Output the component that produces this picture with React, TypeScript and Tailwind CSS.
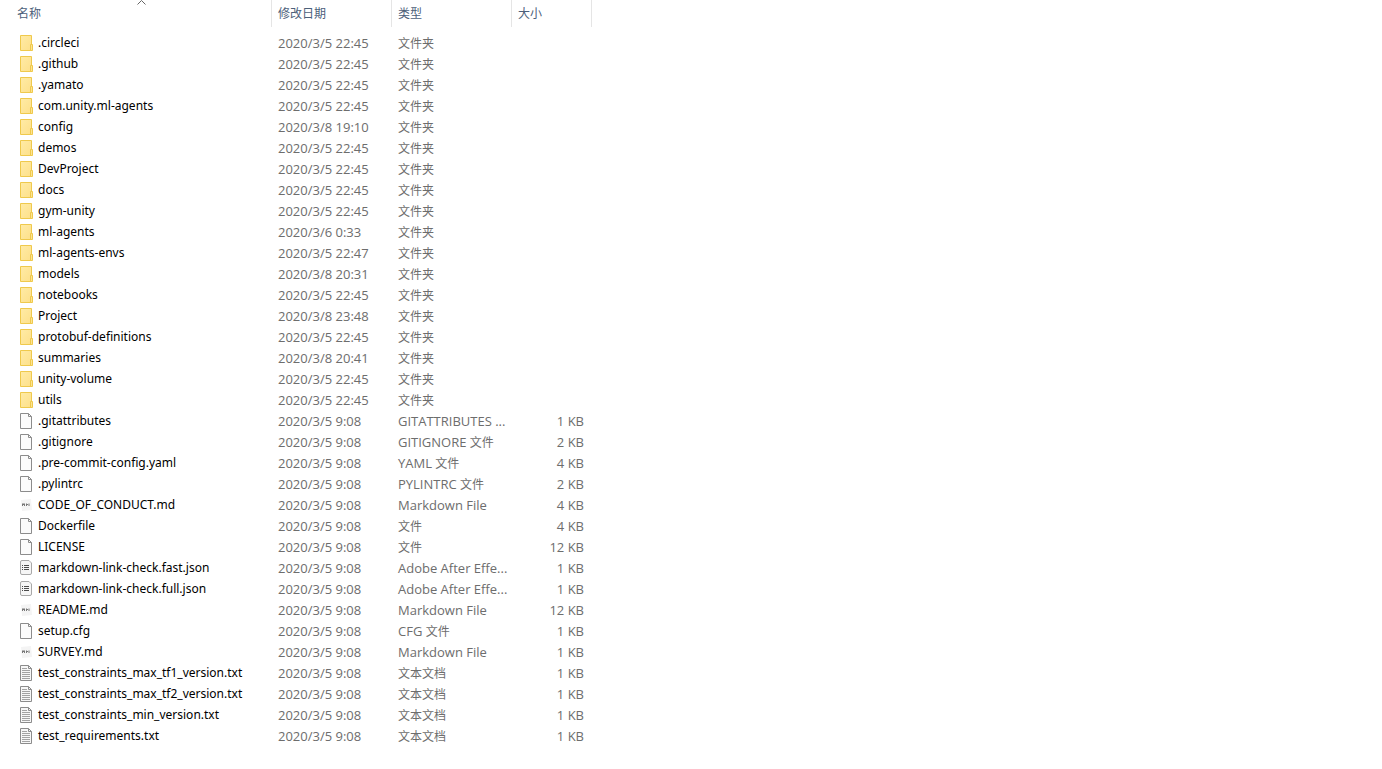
type Kind = "folder" | "file" | "markdown" | "json" | "text";

type Entry = {
  name: string;
  date: string;
  kind: Kind;
  type: [string, string];
  size: string;
};

const folder = (name: string, date = "2020/3/5 22:45"): Entry => ({
  name,
  date,
  kind: "folder",
  type: ["", "文件夹"],
  size: "",
});

const file = (name: string, kind: Kind, latin: string, cjk: string, size: string): Entry => ({
  name,
  date: "2020/3/5 9:08",
  kind,
  type: [latin, cjk],
  size,
});

const entries: Entry[] = [
  folder(".circleci"),
  folder(".github"),
  folder(".yamato"),
  folder("com.unity.ml-agents"),
  folder("config", "2020/3/8 19:10"),
  folder("demos"),
  folder("DevProject"),
  folder("docs"),
  folder("gym-unity"),
  folder("ml-agents", "2020/3/6 0:33"),
  folder("ml-agents-envs", "2020/3/5 22:47"),
  folder("models", "2020/3/8 20:31"),
  folder("notebooks"),
  folder("Project", "2020/3/8 23:48"),
  folder("protobuf-definitions"),
  folder("summaries", "2020/3/8 20:41"),
  folder("unity-volume"),
  folder("utils"),
  file(".gitattributes", "file", "GITATTRIBUTES ...", "", "1 KB"),
  file(".gitignore", "file", "GITIGNORE ", "文件", "2 KB"),
  file(".pre-commit-config.yaml", "file", "YAML ", "文件", "4 KB"),
  file(".pylintrc", "file", "PYLINTRC ", "文件", "2 KB"),
  file("CODE_OF_CONDUCT.md", "markdown", "Markdown File", "", "4 KB"),
  file("Dockerfile", "file", "", "文件", "4 KB"),
  file("LICENSE", "file", "", "文件", "12 KB"),
  file("markdown-link-check.fast.json", "json", "Adobe After Effe...", "", "1 KB"),
  file("markdown-link-check.full.json", "json", "Adobe After Effe...", "", "1 KB"),
  file("README.md", "markdown", "Markdown File", "", "12 KB"),
  file("setup.cfg", "file", "CFG ", "文件", "1 KB"),
  file("SURVEY.md", "markdown", "Markdown File", "", "1 KB"),
  file("test_constraints_max_tf1_version.txt", "text", "", "文本文档", "1 KB"),
  file("test_constraints_max_tf2_version.txt", "text", "", "文本文档", "1 KB"),
  file("test_constraints_min_version.txt", "text", "", "文本文档", "1 KB"),
  file("test_requirements.txt", "text", "", "文本文档", "1 KB"),
];

function FileIcon({ kind }: { kind: Kind }) {
  return (
    <svg className="mt-[3px] h-4 w-4 shrink-0" viewBox="0 0 16 16" fill="none" aria-hidden="true">
      {kind === "folder" && (
        <>
          <defs>
            <linearGradient id="folder-fill" x1="0" y1="0" x2="1" y2="1">
              <stop offset="0" stopColor="#ffeba6" />
              <stop offset="1" stopColor="#fde08a" />
            </linearGradient>
          </defs>
          <path d="M2.5.5h11v15h-11z" fill="url(#folder-fill)" stroke="#efc94c" />
          <path d="M12.5 9.5h2v6h-2z" fill="#fde391" stroke="#efc94c" />
        </>
      )}
      {(kind === "file" || kind === "text") && (
        <>
          <path d="M2.5.5h8l3 3v12h-11z" fill={kind === "text" ? "#f7f7f7" : "#fbfbfb"} stroke="#8c8c8c" />
          <path d="M10.5.5v3h3" stroke="#8c8c8c" />
        </>
      )}
      {kind === "text" && (
        <path d="M4 3.5h5M4 5.5h8M4 7.5h8M4 9.5h8M4 11.5h8M4 13.5h8" stroke="#a3a3a3" />
      )}
      {kind === "json" && (
        <>
          <path d="M4 .5h7l2.5 2.5v10a1.5 1.5 0 0 1-1.5 1.5H4A1.5 1.5 0 0 1 2.5 13V2A1.5 1.5 0 0 1 4 .5z" fill="#f6f6f6" stroke="#a8a8a8" />
          <path d="M4 5.5h1M4 7.5h1M4 9.5h1M6 5.5h5M6 7.5h5M6 9.5h5" stroke="#4c4c4c" />
        </>
      )}
      {kind === "markdown" && (
        <>
          <path d="M3 3l10-1 1 11-10 1z" fill="#f4f4f4" />
          <path d="M4.5 9V6.5M5.5 6.5v1.5M6.5 6.5V9M8.5 9V6.5M8 7.5h2M11 6.5V9" stroke="#777" />
        </>
      )}
    </svg>
  );
}

const columns = ["修改日期", "类型", "大小"];

export default function App() {
  return (
    <main className="overflow-x-auto bg-white pb-5 font-['Open_Sans','Noto_Sans_CJK_SC',sans-serif] text-[13px] leading-5 text-[#6d6d6d]">
      <table className="w-[592px] table-fixed border-separate border-spacing-0">
        <colgroup>
          <col className="w-[271px]" />
          <col className="w-[120px]" />
          <col className="w-[120px]" />
          <col />
        </colgroup>
        <thead>
          <tr className="h-[27px] text-left text-xs text-[#4c607a]">
            <th className="relative p-0 font-normal" aria-sort="ascending">
              <button className="block w-full pl-[17px] text-left">名称</button>
              <svg className="absolute top-0 left-[137px] h-[5px] w-[9px]" viewBox="0 0 9 5" fill="none" aria-hidden="true">
                <path d="M.5 4.5l4-4 4 4" stroke="#666" />
              </svg>
            </th>
            {columns.map((label) => (
              <th key={label} className="border-l border-[#e5e5e5] p-0 font-normal last:border-r">
                <button className="block w-full pl-[6px] text-left">{label}</button>
              </th>
            ))}
          </tr>
        </thead>
        <tbody>
          <tr className="h-[5px]" aria-hidden="true">
            <td className="p-0" colSpan={4} />
          </tr>
          {entries.map((entry) => (
            <tr key={entry.name} className="h-[21px] whitespace-nowrap">
              <td className="p-0">
                <div className="flex items-start gap-1 pl-[18px] text-black">
                  <FileIcon kind={entry.kind} />
                  <span className="pt-px font-['Noto_Sans','Noto_Sans_CJK_SC',sans-serif] text-xs leading-5">{entry.name}</span>
                </div>
              </td>
              <td className="p-0 pl-[7px]">{entry.date}</td>
              <td className="p-0 pl-[7px]">
                {entry.type[0]}
                <span className="text-xs">{entry.type[1]}</span>
              </td>
              <td className="p-0 pr-2 text-right">{entry.size}</td>
            </tr>
          ))}
        </tbody>
      </table>
    </main>
  );
}
